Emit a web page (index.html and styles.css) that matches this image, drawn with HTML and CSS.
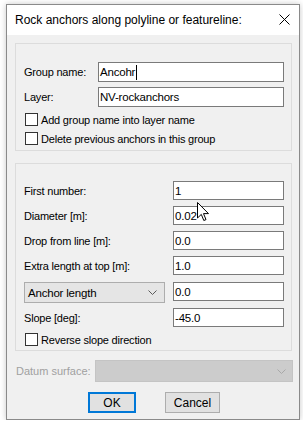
FILE: index.html
```html
<!DOCTYPE html>
<html lang="en">
<head>
    <meta charset="UTF-8">
    <meta name="viewport" content="width=device-width, initial-scale=1.0">
    <title>Rock anchors along polyline or featureline</title>
    <link rel="stylesheet" href="styles.css">
</head>
<body>
    <div class="window">
        <div class="titlebar">
            <span class="title">Rock anchors along polyline or featureline:</span>
            <svg class="close" width="11" height="11" viewBox="0 0 11 11">
                <path d="M0.5 0.5 L10.5 10.5 M10.5 0.5 L0.5 10.5" stroke="#000" stroke-width="1" fill="none"/>
            </svg>
        </div>

        <div class="client">
            <div class="group group-top">
                <div class="form-grid grid-top">
                    <label class="lbl">Group name:</label>
                    <div class="textbox"><span class="caret">Ancohr</span></div>
                    <label class="lbl">Layer:</label>
                    <div class="textbox">NV-rockanchors</div>
                </div>
                <div class="check-row first-check"><span class="checkbox"></span>Add group name into layer name</div>
                <div class="check-row"><span class="checkbox"></span>Delete previous anchors in this group</div>
            </div>

            <div class="group group-bottom">
                <div class="form-grid grid-bottom">
                    <label class="lbl">First number:</label>
                    <div class="textbox">1</div>
                    <label class="lbl">Diameter [m]:</label>
                    <div class="textbox">0.02</div>
                    <label class="lbl">Drop from line [m]:</label>
                    <div class="textbox">0.0</div>
                    <label class="lbl">Extra length at top [m]:</label>
                    <div class="textbox">1.0</div>
                </div>
                <div class="combo-row">
                    <div class="combo">
                        <span>Anchor length</span>
                        <svg width="9" height="5" viewBox="0 0 9 5"><polyline points="0.5,0.5 4.5,4.5 8.5,0.5" stroke="#5a5a5a" fill="none"/></svg>
                    </div>
                    <div class="textbox">0.0</div>
                </div>
                <div class="form-grid grid-bottom slope-row">
                    <label class="lbl">Slope [deg]:</label>
                    <div class="textbox">-45.0</div>
                </div>
                <div class="check-row last-check"><span class="checkbox"></span>Reverse slope direction</div>

                <!-- mouse pointer over diameter field -->
                <svg class="pointer" width="13" height="20" viewBox="0 0 13 20">
                    <path d="M0.5 0.5 L0.5 16 L4.3 12.4 L6.8 18.5 L9 17.6 L6.5 11.6 L11.5 11.6 Z" fill="#fff" stroke="#000" stroke-width="1" stroke-linejoin="round"/>
                </svg>
            </div>

            <div class="datum-row">
                <span class="lbl disabled">Datum surface:</span>
                <div class="combo-disabled">
                    <svg width="9" height="5" viewBox="0 0 9 5"><polyline points="0.5,0.5 4.5,4.5 8.5,0.5" stroke="#a8a8a8" fill="none"/></svg>
                </div>
            </div>

            <div class="buttons">
                <button class="btn btn-default">OK</button>
                <button class="btn">Cancel</button>
            </div>
        </div>
    </div>
</body>
</html>
```

FILE: styles.css
```css
body {
    margin: 0;
    background: #ffffff;
    font-family: 'Liberation Sans', Arial, sans-serif;
    font-size: 11px;
    letter-spacing: -0.2px;
    color: #000;
}
.window {
    margin: 4px 0 0 6px;
    width: 292px;
    border: 1px solid #8a8a8a;
    box-shadow: 0 0 6px rgba(0, 0, 0, 0.22);
    background: #f0f0f0;
}
.titlebar {
    height: 30px;
    background: #fff;
    display: flex;
    align-items: center;
    justify-content: space-between;
    padding: 0 9px 0 8px;
}
.title {
    font-size: 12px;
    letter-spacing: 0;
    color: #000;
    margin-top: -1px;
}
.close {
    display: block;
    margin-top: -1px;
}
.client {
    height: 384px;
    padding: 8px 0 0 8px;
    box-sizing: border-box;
}
.group {
    width: 277px;
    box-sizing: border-box;
    border: 1px solid #dcdcdc;
    padding: 0 7px 0 8px;
    position: relative;
}
.group-top {
    padding-top: 18px;
    padding-bottom: 2px;
}
.group-bottom {
    margin-top: 12px;
    padding-top: 17px;
    padding-bottom: 1px;
}
.form-grid {
    display: grid;
    row-gap: 6px;
    align-items: center;
}
.grid-top {
    grid-template-columns: 74px 186px;
    row-gap: 5px;
}
.grid-top .textbox {
    height: 20px;
}
.grid-bottom {
    grid-template-columns: 149px 111px;
}
.lbl {
    white-space: nowrap;
}
.lbl.disabled {
    color: #a0a0a0;
    letter-spacing: 0;
}
.textbox {
    height: 19px;
    box-sizing: border-box;
    border: 1px solid #7a7a7a;
    background: #fff;
    padding: 0 1px;
    display: flex;
    align-items: center;
    font-size: 11.5px;
    letter-spacing: -0.2px;
}
.caret {
    border-right: 1px solid #000;
    padding-right: 1px;
    line-height: 15px;
}
.check-row {
    height: 19px;
    display: flex;
    align-items: center;
    padding-left: 1px;
    white-space: nowrap;
}
.first-check {
    margin-top: 3px;
}
.last-check {
    margin-top: 3px;
}
.checkbox {
    width: 13px;
    height: 13px;
    box-sizing: border-box;
    border: 1px solid #333;
    background: #fff;
    margin-right: 3px;
}
.combo-row {
    display: grid;
    grid-template-columns: 149px 111px;
    align-items: start;
    margin-top: 7px;
}
.combo {
    width: 141px;
    height: 21px;
    box-sizing: border-box;
    border: 1px solid #adadad;
    background: #e5e5e5;
    display: flex;
    align-items: center;
    justify-content: space-between;
    padding: 0 7px 0 3px;
    font-size: 11.5px;
}
.combo svg {
    display: block;
}
.slope-row {
    margin-top: 5px;
}
.pointer {
    position: absolute;
    left: 181px;
    top: 38px;
}
.datum-row {
    display: flex;
    align-items: center;
    margin-top: 9px;
    margin-left: 1px;
    height: 22px;
}
.datum-row .lbl {
    width: 79px;
}
.combo-disabled {
    width: 198px;
    height: 22px;
    box-sizing: border-box;
    background: #cccccc;
    border: 1px solid #c4c4c4;
    display: flex;
    align-items: center;
    justify-content: flex-end;
    padding-right: 6px;
}
.buttons {
    display: flex;
    gap: 29px;
    margin-top: 10px;
    padding-left: 73px;
}
.btn {
    height: 21px;
    box-sizing: border-box;
    border: 1px solid #adadad;
    background: #e1e1e1;
    font-family: 'Liberation Sans', Arial, sans-serif;
    font-size: 12px;
    padding: 0;
    color: #000;
    width: 55px;
}
.btn-default {
    width: 48px;
    border: 2px solid #0078d7;
}
```
